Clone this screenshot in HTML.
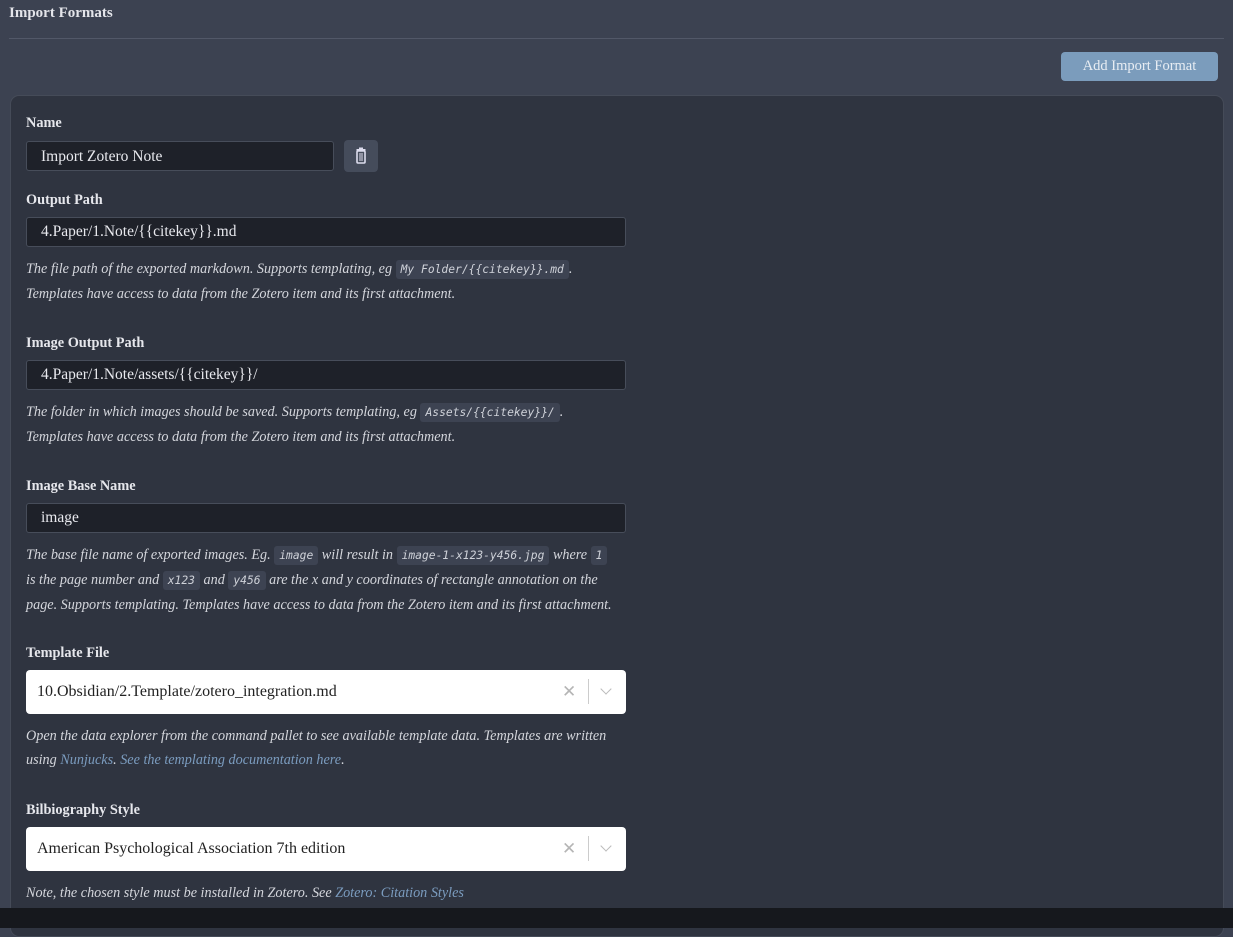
<!DOCTYPE html>
<html><head><style>
body{margin:0;width:1233px;height:917px;overflow:hidden;background:#3c4251;font-family:"Liberation Serif",serif;color:#dcdde2;position:relative}
.a{position:absolute}
h1{position:absolute;left:9px;top:5px;margin:0;font-size:15px;font-weight:bold;color:#e4e5ea}
.hr{left:9px;top:38px;width:1215px;height:1px;background:#525868}
.btn{left:1061px;top:52px;width:157px;height:29px;background:#7b9cbc;border-radius:4px;color:#e8edf3;font-size:14.5px;text-align:center;line-height:29px}
.card{left:10px;top:95px;width:1212px;height:840px;background:#2f3440;border:1px solid #454b58;border-radius:9px}
.lbl{left:26px;font-size:14.3px;font-weight:bold;color:#e6e7ec}
.in{left:26px;width:600px;height:30px;background:#1e2129;border:1px solid #474d5a;border-radius:3px;font-size:15.5px;line-height:28px;padding-left:14px;box-sizing:border-box;color:#e8e9ee}
.d{left:26px;font-size:14.2px;font-style:italic;line-height:24px;color:#d4d6dc;width:620px;white-space:nowrap}
code{font-family:"DejaVu Sans Mono",monospace;font-size:11.3px;background:#3d4352;border-radius:3px;padding:3px 5px;font-style:italic;color:#cfd2d9}
.sel{left:26px;width:600px;height:44px;background:#fff;border-radius:4px;color:#222;font-size:16px;line-height:44px;padding-left:11px;box-sizing:border-box}
.sel .x{position:absolute;left:536px;top:0;color:#b5b5b5;font-size:17px}
.sel .bar{position:absolute;left:562px;top:9px;width:1px;height:25px;background:#ccc}
.sel .v{position:absolute;left:576px;top:15px;width:7px;height:7px;border-right:1.5px solid #bbb;border-bottom:1.5px solid #bbb;transform:rotate(45deg)}
a{color:#7b9cbf}
</style></head><body>
<h1>Import Formats</h1>
<div class="a hr"></div>
<div class="a btn">Add Import Format</div>
<div class="a card"></div>
<div class="a lbl" style="top:115px">Name</div>
<div class="a in" style="top:141px;width:308px;height:30px;line-height:30px">Import Zotero Note</div>
<div class="a" style="left:344px;top:140px;width:34px;height:32px;background:#454c5b;border-radius:4px">
<svg width="34" height="32" viewBox="0 0 34 32"><rect x="12.5" y="9" width="9" height="2" fill="#dde"/><rect x="15" y="7.5" width="4" height="2" fill="#dde"/><rect x="13" y="11" width="8" height="12" rx="1" fill="none" stroke="#dde" stroke-width="1.6"/><rect x="15.5" y="13" width="1" height="8" fill="#dde"/><rect x="17.5" y="13" width="1" height="8" fill="#dde"/></svg></div>
<div class="a lbl" style="top:192px">Output Path</div>
<div class="a in" style="top:217px">4.Paper/1.Note/{{citekey}}.md</div>
<div class="a d" style="top:257px">The file path of the exported markdown. Supports templating, eg <code>My Folder/{{citekey}}.md</code>.<br>Templates have access to data from the Zotero item and its first attachment.</div>
<div class="a lbl" style="top:335px">Image Output Path</div>
<div class="a in" style="top:360px">4.Paper/1.Note/assets/{{citekey}}/</div>
<div class="a d" style="top:400px">The folder in which images should be saved. Supports templating, eg <code>Assets/{{citekey}}/</code>.<br>Templates have access to data from the Zotero item and its first attachment.</div>
<div class="a lbl" style="top:478px">Image Base Name</div>
<div class="a in" style="top:503px">image</div>
<div class="a d" style="top:543px">The base file name of exported images. Eg. <code>image</code> will result in <code>image-1-x123-y456.jpg</code> where <code>1</code><br>is the page number and <code>x123</code> and <code>y456</code> are the x and y coordinates of rectangle annotation on the<br>page. Supports templating. Templates have access to data from the Zotero item and its first attachment.</div>
<div class="a lbl" style="top:645px">Template File</div>
<div class="a sel" style="top:670px">10.Obsidian/2.Template/zotero_integration.md<span class="x">✕</span><span class="bar"></span><span class="v"></span></div>
<div class="a d" style="top:724px">Open the data explorer from the command pallet to see available template data. Templates are written<br>using <a>Nunjucks</a>. <a>See the templating documentation here</a>.</div>
<div class="a lbl" style="top:802px">Bilbiography Style</div>
<div class="a sel" style="top:827px">American Psychological Association 7th edition<span class="x">✕</span><span class="bar"></span><span class="v"></span></div>
<div class="a d" style="top:881px">Note, the chosen style must be installed in Zotero. See <a>Zotero: Citation Styles</a></div>
<div class="a" style="left:0;top:908px;width:1233px;height:20px;background:#16181d;z-index:5"></div>
</body></html>
